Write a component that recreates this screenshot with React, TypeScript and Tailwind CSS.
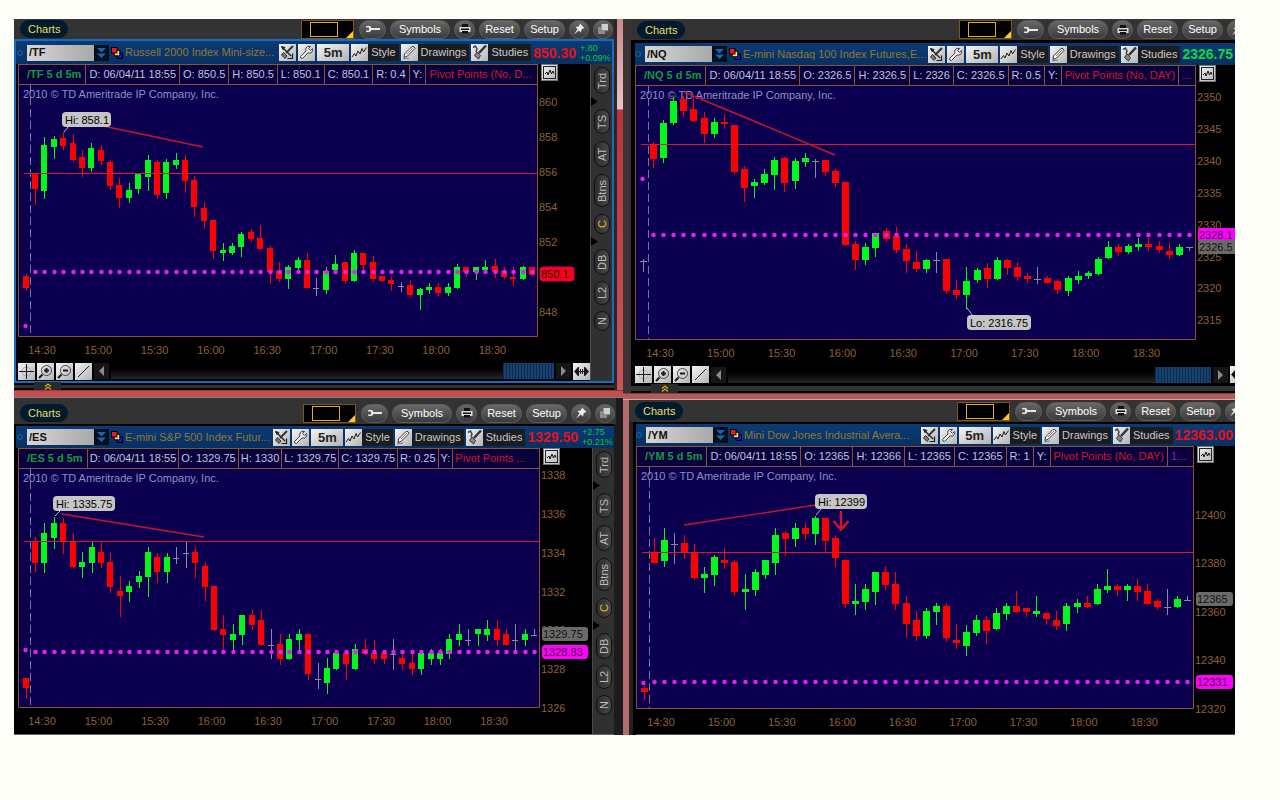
import type { ReactNode } from "react";
import clsx from "clsx";

// colour, wick top, body top, body bottom, wick bottom
type Candle = ["r" | "g" | "x", number, number, number, number];

type Badge = { y: number; text: string; className: string; width: number };

type ChartProps = {
  title: string;
  left: number;
  top: number;
  width: number;
  height: number;
  plotRight: number;
  plotBottom: number;
  firstX: number;
  step: number;
  bodyWidth: number;
  candles: Candle[];
  previous: { x: number; candle: Candle };
  sessionX: number;
  lineY: number;
  trend: [number, number, number, number];
  dotY: number;
  previousDotY: number;
  prices: [string, number][];
  firstTimeX: number;
  timeStep: number;
  timeY: number;
  badges: Badge[];
  callout: { x: number; y: number; width: number; text: string; tip: string };
  children?: ReactNode;
};

const FILLS = { r: "#ff0000", g: "#00f91a", x: "#8b87a0" };
const TIMES = ["14:30", "15:00", "15:30", "16:00", "16:30", "17:00", "17:30", "18:00", "18:30"];

const tfCandles: Candle[] = [
  ["r", 173, 173, 189, 204], ["g", 137, 145, 191, 198], ["g", 136, 139, 147, 158], ["r", 132, 138, 146, 149],
  ["r", 134, 143, 160, 161], ["r", 150, 157, 168, 176], ["g", 143, 148, 168, 171], ["r", 145, 150, 161, 164],
  ["r", 160, 162, 186, 189], ["r", 178, 185, 198, 207], ["g", 183, 190, 198, 202], ["g", 173, 174, 189, 193],
  ["g", 155, 160, 177, 190], ["r", 160, 162, 195, 198], ["g", 159, 162, 193, 198], ["g", 153, 160, 165, 168],
  ["r", 155, 160, 181, 192], ["r", 176, 180, 207, 216], ["r", 202, 208, 221, 228], ["r", 220, 220, 251, 258],
  ["g", 243, 250, 253, 260], ["g", 243, 246, 253, 254], ["g", 232, 234, 247, 256], ["r", 229, 232, 239, 241],
  ["r", 225, 238, 249, 249], ["r", 246, 248, 272, 283], ["r", 262, 271, 279, 281], ["g", 265, 267, 279, 288],
  ["g", 257, 260, 268, 270], ["r", 253, 260, 288, 288], ["x", 278, 288, 288, 295], ["g", 267, 271, 290, 293],
  ["g", 255, 264, 270, 272], ["r", 262, 262, 281, 283], ["g", 250, 253, 281, 281], ["r", 253, 253, 265, 270],
  ["r", 256, 262, 279, 281], ["r", 276, 276, 281, 281], ["r", 277, 280, 284, 290], ["x", 282, 286, 286, 291],
  ["r", 280, 285, 295, 296], ["g", 288, 289, 295, 309], ["g", 283, 287, 290, 293], ["r", 283, 287, 293, 295],
  ["g", 283, 287, 293, 295], ["g", 264, 267, 288, 288], ["r", 267, 267, 272, 276], ["g", 267, 267, 272, 279],
  ["g", 260, 267, 270, 270], ["r", 259, 266, 272, 277], ["r", 267, 271, 277, 278], ["r", 267, 277, 279, 285],
  ["g", 266, 267, 279, 279], ["r", 267, 267, 275, 275],
];

const nqCandles: Candle[] = [
  ["r", 142, 144, 159, 167], ["g", 120, 123, 158, 162], ["g", 97, 101, 123, 124], ["r", 96, 99, 111, 116],
  ["r", 97, 109, 121, 121], ["r", 112, 118, 134, 142], ["g", 118, 122, 134, 137], ["r", 114, 122, 124, 128],
  ["r", 125, 125, 172, 173], ["r", 166, 169, 188, 201], ["g", 179, 182, 186, 197], ["g", 169, 174, 183, 184],
  ["g", 157, 160, 175, 189], ["r", 157, 158, 183, 191], ["g", 158, 161, 181, 188], ["g", 153, 158, 162, 166],
  ["x", 159, 161, 161, 177], ["r", 160, 160, 172, 175], ["r", 169, 171, 183, 186], ["r", 182, 182, 245, 245],
  ["r", 241, 244, 260, 269], ["g", 243, 247, 260, 264], ["g", 233, 233, 248, 256], ["r", 228, 231, 239, 241],
  ["r", 227, 236, 250, 252], ["r", 244, 249, 261, 272], ["r", 251, 262, 269, 271], ["g", 259, 260, 269, 272],
  ["x", 252, 260, 260, 272], ["r", 259, 259, 291, 293], ["r", 280, 290, 295, 298], ["g", 267, 281, 295, 308],
  ["g", 268, 270, 280, 282], ["r", 263, 268, 279, 287], ["g", 257, 260, 279, 279], ["r", 259, 260, 268, 274],
  ["r", 262, 267, 277, 280], ["r", 273, 276, 279, 282], ["x", 267, 279, 279, 283], ["r", 276, 278, 283, 283],
  ["r", 279, 281, 290, 293], ["g", 276, 278, 291, 295], ["g", 271, 276, 280, 283], ["g", 271, 273, 276, 278],
  ["g", 257, 259, 274, 274], ["g", 241, 247, 258, 258], ["r", 244, 247, 252, 255], ["g", 244, 246, 252, 253],
  ["g", 238, 244, 247, 250], ["r", 238, 244, 247, 250], ["r", 241, 246, 250, 252], ["r", 243, 251, 255, 258],
  ["g", 244, 247, 255, 255], ["x", 247, 247, 247, 250],
];

const esCandles: Candle[] = [
  ["r", 537, 541, 563, 571], ["g", 523, 533, 563, 572], ["g", 517, 523, 538, 548], ["r", 518, 523, 542, 553],
  ["r", 533, 541, 567, 567], ["g", 552, 562, 567, 577], ["g", 542, 547, 563, 572], ["r", 542, 552, 563, 567],
  ["r", 553, 562, 587, 592], ["r", 576, 591, 596, 616], ["g", 581, 586, 592, 601], ["g", 571, 576, 582, 587],
  ["g", 547, 552, 577, 596], ["r", 553, 557, 572, 582], ["g", 553, 557, 572, 582], ["x", 547, 558, 558, 563],
  ["x", 542, 553, 553, 567], ["r", 547, 552, 563, 577], ["r", 562, 566, 587, 600], ["r", 586, 586, 630, 630],
  ["r", 615, 629, 635, 651], ["g", 624, 634, 640, 650], ["g", 615, 615, 635, 644], ["r", 610, 615, 625, 629],
  ["r", 610, 620, 645, 645], ["x", 629, 645, 645, 658], ["r", 634, 644, 659, 664], ["g", 634, 639, 659, 659],
  ["g", 629, 634, 640, 651], ["r", 634, 634, 674, 679], ["x", 663, 679, 679, 688], ["g", 658, 668, 683, 693],
  ["g", 650, 653, 669, 669], ["r", 650, 653, 664, 679], ["g", 644, 649, 669, 669], ["r", 639, 649, 654, 654],
  ["r", 640, 653, 659, 663], ["r", 650, 653, 659, 663], ["x", 639, 654, 654, 669], ["r", 654, 658, 664, 669],
  ["r", 654, 663, 669, 674], ["g", 652, 653, 669, 674], ["g", 649, 653, 659, 664], ["g", 649, 653, 659, 664],
  ["g", 634, 639, 654, 658], ["g", 624, 634, 640, 645], ["x", 629, 640, 640, 645], ["g", 629, 629, 634, 645],
  ["g", 620, 629, 635, 640], ["r", 620, 629, 640, 645], ["r", 629, 634, 645, 645], ["x", 624, 640, 640, 651],
  ["g", 629, 634, 640, 645], ["x", 629, 635, 635, 635],
];

const ymCandles: Candle[] = [
  ["r", 538, 552, 563, 563], ["g", 528, 540, 561, 566], ["x", 533, 544, 544, 563], ["r", 535, 543, 553, 558],
  ["r", 544, 552, 578, 579], ["g", 567, 574, 578, 592], ["g", 555, 557, 575, 585], ["r", 548, 560, 563, 568],
  ["r", 560, 562, 592, 595], ["g", 574, 589, 592, 609], ["g", 569, 572, 590, 595], ["g", 560, 560, 575, 578],
  ["g", 528, 535, 563, 574], ["r", 531, 533, 539, 555], ["g", 523, 528, 539, 546], ["r", 523, 528, 534, 539],
  ["g", 516, 518, 534, 544], ["r", 518, 518, 541, 550], ["r", 535, 538, 558, 566], ["r", 560, 560, 604, 607],
  ["g", 584, 601, 604, 614], ["g", 584, 589, 602, 609], ["g", 572, 572, 592, 604], ["r", 566, 572, 585, 589],
  ["r", 572, 584, 604, 609], ["r", 596, 603, 624, 636], ["r", 611, 620, 636, 640], ["g", 608, 611, 636, 638],
  ["g", 603, 606, 612, 624], ["r", 603, 606, 638, 641], ["r", 624, 640, 643, 648], ["g", 625, 632, 646, 655],
  ["g", 615, 620, 633, 635], ["r", 616, 620, 631, 643], ["g", 608, 613, 629, 629], ["g", 603, 606, 614, 619],
  ["r", 591, 606, 612, 612], ["r", 608, 608, 612, 616], ["g", 596, 611, 614, 616], ["r", 613, 613, 619, 624],
  ["r", 611, 620, 626, 629], ["g", 603, 606, 624, 630], ["g", 599, 603, 607, 612], ["r", 596, 603, 607, 607],
  ["g", 584, 589, 604, 604], ["g", 569, 586, 590, 592], ["r", 584, 586, 590, 595], ["g", 584, 586, 590, 600],
  ["r", 579, 586, 592, 600], ["r", 584, 591, 604, 604], ["r", 599, 601, 607, 609], ["x", 589, 607, 607, 614],
  ["g", 596, 599, 607, 607], ["x", 596, 600, 600, 600],
];

function CandleShape({ x, candle, width }: { x: number; candle: Candle; width: number }) {
  const [kind, high, open, close, low] = candle;
  const half = Math.floor(width / 2);
  return (
    <g fill={FILLS[kind]} shapeRendering="crispEdges">
      <rect x={x} y={high} width="1" height={low - high + 1} />
      <rect x={x - half} y={open} width={width} height={Math.max(close - open, 1)} />
    </g>
  );
}

function Chart(p: ChartProps) {
  return (
    <svg
      viewBox={`${p.left} ${p.top} ${p.width} ${p.height}`}
      className="block w-full h-auto text-[11px]"
      role="img"
      aria-label={p.title}
    >
      <rect x={p.left} y={p.top} width={p.plotRight - p.left} height={p.plotBottom - p.top} fill="#0a004f" />
      <path
        d={`M${p.left + 0.5} ${p.top}V${p.plotBottom + 0.5}H${p.plotRight + 0.5}V${p.top}`}
        fill="none"
        stroke="#8a5236"
      />
      <path d={`M${p.sessionX + 0.5} ${p.top}V${p.plotBottom}`} stroke="#77739a" strokeDasharray="8 4" />
      <text x={p.left + 5} y={p.top + 13} fill="#938fbe">
        2010 © TD Ameritrade IP Company, Inc.
      </text>
      <CandleShape x={p.previous.x} candle={p.previous.candle} width={p.bodyWidth} />
      {p.candles.map((candle, i) => (
        <CandleShape key={i} x={Math.round(p.firstX + p.step * i)} candle={candle} width={p.bodyWidth} />
      ))}
      <rect
        x={p.left + 6}
        y={p.lineY}
        width={p.plotRight - p.left - 6}
        height="1"
        fill="#e0142a"
        shapeRendering="crispEdges"
      />
      <path d={`M${p.trend[0]} ${p.trend[1]}L${p.trend[2]} ${p.trend[3]}`} stroke="#c8142f" strokeWidth="1.4" />
      <g fill="#ea1df0">
        <circle cx={p.left + 7.5} cy={p.previousDotY} r="2.2" />
        {p.candles.map((_, i) => (
          <circle key={i} cx={Math.round(p.firstX + p.step * i) + 0.5} cy={p.dotY} r="2.3" />
        ))}
      </g>
      {p.children}
      <path d={p.callout.tip} stroke="#b9b5d2" fill="none" />
      <rect x={p.callout.x} y={p.callout.y} width={p.callout.width} height="15" rx="4" fill="#c6c6c6" />
      <text x={p.callout.x + 3} y={p.callout.y + 12} fill="#000">
        {p.callout.text}
      </text>
      <g fill="#8d6036">
        {p.prices.map(([label, y]) => (
          <text key={label} x={p.plotRight + 2} y={y + 4}>
            {label}
          </text>
        ))}
        {TIMES.map((time, i) => (
          <text key={time} x={p.firstTimeX + p.timeStep * i} y={p.timeY + 4} textAnchor="middle">
            {time}
          </text>
        ))}
      </g>
      {p.badges.map((badge) => (
        <g key={badge.text}>
          <rect
            x={p.plotRight + 3}
            y={badge.y - 7}
            width={badge.width}
            height="14"
            rx="3"
            className={badge.className}
          />
          <text x={p.plotRight + 4} y={badge.y + 4} fill="#000" fillOpacity="0.85">
            {badge.text}
          </text>
        </g>
      ))}
    </svg>
  );
}

function PillButton({ label, className, children }: { label: string; className?: string; children?: ReactNode }) {
  return (
    <button
      type="button"
      aria-label={label}
      className={clsx(
        "flex h-[19px] shrink-0 items-center justify-center rounded-full border border-[#5f5f5f] bg-linear-to-b from-[#686868] to-[#3b3b3b] text-[11px] text-white",
        className
      )}
    >
      {children ?? label}
    </button>
  );
}

function WindowHeader({ className }: { className: string }) {
  return (
    <header className={clsx("flex items-center gap-1 pl-1.5 pr-px", className)}>
      <h2 className="rounded-full bg-[#021a2e] px-2 text-[11px] leading-[18px] text-[#f0dc5a]">Charts</h2>
      <div className="flex-1" />
      <button
        type="button"
        aria-label="Layout"
        className="mr-px flex h-[19px] w-[53px] shrink-0 items-end justify-between border border-[#7a5a10] bg-black pl-2"
      >
        <span className="mb-px h-[15px] w-[28px] border border-[#e8b018]" />
        <svg viewBox="0 0 7 7" className="size-[7px]">
          <path d="M7 0V7H0Z" fill="#ffc81e" />
        </svg>
      </button>
      <PillButton label="Tools" className="w-[27px]">
        <svg viewBox="0 0 16 8" className="h-2 w-4">
          <path d="M1 1.2Q5.5 0 6.6 3H15V5H6.6Q5.500 8 1 6.800V5.400H4V2.600H1Z" fill="#e8e8e8" />
        </svg>
      </PillButton>
      <PillButton label="Symbols" className="w-[60px]" />
      <PillButton label="Print" className="w-[21px]">
        <svg viewBox="0 0 12 12" className="size-3">
          <path d="M3 1H9V4H3Z" fill="#111" />
          <path d="M0.500 4H11.500V9H0.500Z" fill="#d8d8d8" />
          <path d="M2 5.500H10V7H2ZM3 8H9V10.500H3Z" fill="#111" />
        </svg>
      </PillButton>
      <PillButton label="Reset" className="w-[41px]" />
      <PillButton label="Setup" className="w-[41px]" />
      <PillButton label="Pin" className="w-[20px]">
        <svg viewBox="0 0 12 12" className="size-3">
          <path d="M7 0.500L11.500 5L10 5.500L8.500 6.500L8 9.500L5.800 7.500L1 11.500L4.500 6.200L2.500 4L5.500 3.500L6.500 2Z" fill="#ededed" />
        </svg>
      </PillButton>
      <PillButton label="Detach" className="w-[20px]">
        <svg viewBox="0 0 12 12" className="size-3">
          <path d="M1 4H4V8H8V11H1Z" fill="#8c8c8c" />
          <path d="M4.500 1H11V7.500H4.500Z" fill="#cfcfcf" />
        </svg>
      </PillButton>
    </header>
  );
}

const lightFace = "bg-linear-to-br from-[#f4f4f4] to-[#b4b4b4]";

function SquareIcon({ children }: { children: ReactNode }) {
  return (
    <svg viewBox="0 0 17 17" fill="none" stroke="#1b1b1b" className={clsx("size-[17px] shrink-0", lightFace)}>
      {children}
    </svg>
  );
}

function ToolButton({ label, icon }: { label: string; icon: ReactNode }) {
  return (
    <button type="button" className="flex shrink-0 items-center bg-[#1a1c1f] pr-[3px] text-[11px] text-[#c9c9c9]">
      {icon}
      <span className="pl-[3px]">{label}</span>
    </button>
  );
}

type SymbolBarProps = {
  symbol: string;
  name: string;
  price: string;
  priceClass: string;
  change?: [string, string];
  className: string;
};

function SymbolBar({ symbol, name, price, priceClass, change, className }: SymbolBarProps) {
  return (
    <div
      className={clsx(
        "flex items-center gap-0.5 overflow-hidden whitespace-nowrap bg-linear-to-b from-[#0b3a74] to-[#08305f]",
        className
      )}
    >
      <span className="mr-0.5 size-[6px] shrink-0 rounded-full border border-[#1766b0]" />
      <div className="flex shrink-0">
        <input
          aria-label="Symbol"
          defaultValue={symbol}
          className="h-4 w-[67px] bg-linear-to-r from-[#d6d6d6] to-[#a9a9a9] pl-0.5 text-[11px] font-bold text-[#111]"
        />
        <button type="button" aria-label="Symbol list" className="h-4 w-[15px] bg-[#04101f]">
          <svg viewBox="0 0 15 16" className="h-4 w-[15px]">
            <path d="M3 3H12L7.500 7.500ZM3 8.500H12L7.500 13Z" fill="#1c63ad" />
          </svg>
        </button>
      </div>
      <svg viewBox="0.500 0.500 13 13" className="size-3 shrink-0">
        <rect x="7" y="7" width="6" height="6" fill="#1414e6" stroke="#000" />
        <rect x="4" y="4" width="6" height="6" fill="#ffe65a" stroke="#000" />
        <rect x="1" y="1" width="6" height="6" fill="#f21818" stroke="#000" />
      </svg>
      <span className="min-w-0 flex-1 overflow-hidden text-[11px] text-[#8f7838]">{name}</span>
      <button type="button" aria-label="Link" className="shrink-0">
        <SquareIcon>
          <path d="M3 3L12 12" strokeWidth="1.200" />
          <path d="M13.500 9.500V14.500H8.500" strokeWidth="1.200" />
          <path d="M14 2L7 9" stroke="#333" strokeWidth="2" />
          <path d="M4.500 8.500L8 12L6 14.500L2.500 11Z" fill="#777" stroke="#333" />
          <path d="M2.500 2.500L6 3.500L4 5.500Z" fill="#333" />
        </SquareIcon>
      </button>
      <button type="button" aria-label="Settings" className="shrink-0">
        <SquareIcon>
          <path
            d="M14.500 4.500L12.500 6.500L10.500 4.500L12.500 2.500Q9.500 1.500 8 4Q7.300 5.500 8 7L2.500 12.500Q2 14.500 4.500 14.500L10 9Q13.500 10 14.500 7Q15 5.500 14.500 4.500Z"
            stroke="#444"
            fill="#e9e9e9"
          />
        </SquareIcon>
      </button>
      <button
        type="button"
        className={clsx("h-[17px] w-8 shrink-0 text-[13px] leading-[17px] font-bold text-[#222]", lightFace)}
      >
        5m
      </button>
      <ToolButton
        label="Style"
        icon={
          <SquareIcon>
            <path d="M1 13L3.500 9.500L5 12L7 7L9 10L11 4.500L12.500 8L15.500 3.500" />
          </SquareIcon>
        }
      />
      <ToolButton
        label="Drawings"
        icon={
          <SquareIcon>
            <path d="M3.500 10L11 2.500Q13.500 2 14 4.500L6.500 12L3 13.500Z" fill="#fff" stroke="#333" />
            <path d="M6 10L12 4M2 15L8 14" stroke="#777" />
          </SquareIcon>
        }
      />
      <ToolButton
        label="Studies"
        icon={
          <SquareIcon>
            <path d="M15 1.500L8 9" stroke="#333" strokeWidth="2.500" />
            <path d="M6 8L9.500 11.500L7.500 15L3.500 11.500Z" fill="#888" stroke="#333" />
            <path d="M2 3.500L4.500 2L6 5L5 8" stroke="#444" strokeWidth="1.500" />
          </SquareIcon>
        }
      />
      <strong className={clsx("shrink-0 pr-0.5 text-sm leading-5", priceClass)}>{price}</strong>
      {change && (
        <span className="w-8 shrink-0 text-[9px] leading-[10px] text-[#0cc44a]">
          {change[0]}
          <br />
          {change[1]}
        </span>
      )}
    </div>
  );
}

type InfoRowProps = { cells: string[]; study: string; extra?: string; dense?: boolean; iconClass: string };

function InfoRow({ cells, study, extra, dense, iconClass }: InfoRowProps) {
  const pad = dense ? "px-0.5" : "px-[3px]";
  return (
    <div className="flex h-[21px] text-[11px] leading-[19px] whitespace-nowrap">
      <div className="flex min-w-0 flex-1 divide-x divide-[#8a5236] overflow-hidden border border-[#8a5236] bg-[#07003c] text-[#c3c1dc]">
        {cells.map((cell, i) => (
          <span key={cell} className={clsx("shrink-0", i === 0 ? "pl-2 pr-1 font-bold text-[#129a3c]" : pad)}>
            {cell}
          </span>
        ))}
        <span className={clsx("overflow-hidden text-[#d0142e]", pad, extra ? "shrink-0" : "min-w-0 flex-1")}>
          {study}
        </span>
        {extra && <span className="min-w-0 flex-1 overflow-hidden pl-[3px] text-[#8c22c8]">{extra}</span>}
      </div>
      <div className={clsx("shrink-0 pl-[3px]", iconClass)}>
        <button type="button" aria-label="Chart mode" className="block border border-[#777]">
          <svg viewBox="0 0 15 15" className={clsx("size-[15px]", lightFace)}>
            <rect x="1.500" y="1.500" width="12" height="12" fill="none" stroke="#222" />
            <path d="M3 9L5 7L6 10L8 5L9.500 9L11 6L12 8.500" fill="none" stroke="#111" />
          </svg>
        </button>
      </div>
    </div>
  );
}

function ScrollRow({ className, thumbClass }: { className: string; thumbClass: string }) {
  return (
    <div className={clsx("flex items-center gap-0.5", className)}>
      <button type="button" aria-label="Crosshair">
        <SquareIcon>
          <circle cx="8.500" cy="8.500" r="4.500" stroke="#aaa" />
          <path d="M8.500 1V16M1 8.500H16" />
        </SquareIcon>
      </button>
      <button type="button" aria-label="Zoom in">
        <SquareIcon>
          <circle cx="9.500" cy="7.500" r="5" stroke="#444" />
          <path d="M9.500 5V10M7 7.500H12M5.500 11.500L2 15" strokeWidth="2" />
        </SquareIcon>
      </button>
      <button type="button" aria-label="Zoom out">
        <SquareIcon>
          <circle cx="9.500" cy="7.500" r="5" stroke="#444" />
          <path d="M7 7.500H12M5.500 11.500L2 15" strokeWidth="2" />
        </SquareIcon>
      </button>
      <button type="button" aria-label="Draw line">
        <SquareIcon>
          <path d="M3 14L14 3" />
        </SquareIcon>
      </button>
      <button type="button" aria-label="Scroll left" className="flex h-4 w-[15px] items-center justify-center bg-[#161616]">
        <svg viewBox="0 0 5 10" className="h-2.5 w-[5px]">
          <path d="M5 0V10L0 5Z" fill="#8a8a8a" />
        </svg>
      </button>
      <div className="flex h-4 flex-1 justify-end bg-linear-to-b from-black to-[#262626]">
        <div
          className={clsx(
            "h-4 bg-[repeating-linear-gradient(90deg,#0e2c50_0px,#0e2c50_1px,#17426f_1px,#17426f_3px)]",
            thumbClass
          )}
        />
      </div>
      <button type="button" aria-label="Scroll right" className="flex h-4 w-[15px] items-center justify-center bg-[#161616]">
        <svg viewBox="0 0 5 10" className="h-2.5 w-[5px]">
          <path d="M0 0V10L5 5Z" fill="#8a8a8a" />
        </svg>
      </button>
      <button type="button" aria-label="Fit width">
        <SquareIcon>
          <path d="M5.500 4V13L1.500 8.500ZM11.500 4V13L15.500 8.500Z" fill="#111" />
          <path d="M5 8.500H12M7.500 6V11M9.500 6V11" />
        </SquareIcon>
      </button>
    </div>
  );
}

function Notch() {
  return (
    <svg viewBox="0 0 22 15" className="h-[15px] w-[22px]">
      <path d="M0 3L7 7.500L0 12Z" fill="#000" />
    </svg>
  );
}

function SideTab({ label, className }: { label: string; className: string }) {
  return (
    <button
      type="button"
      className={clsx(
        "flex w-4 rotate-180 items-center justify-center self-center rounded-full border border-[#111] bg-linear-to-r from-[#484848] to-[#2d2d2d] text-[11px] leading-[14px] [writing-mode:vertical-rl]",
        className
      )}
    >
      {label}
    </button>
  );
}

function SideTabs() {
  return (
    <nav className="flex w-[22px] shrink-0 flex-col border-l border-[#4a4a4a] bg-[#303030] pt-[3px] text-[#bdbdbd]">
      <SideTab label="Trd" className="h-[27px]" />
      <Notch />
      <SideTab label="TS" className="mb-[7px] h-[25px]" />
      <SideTab label="AT" className="mb-[7px] h-[26px]" />
      <SideTab label="Btns" className="mb-[7px] h-[33px]" />
      <SideTab label="C" className="h-[20px] text-[#e8c01c]" />
      <Notch />
      <SideTab label="DB" className="mb-[6px] h-[26px]" />
      <SideTab label="L2" className="mb-[6px] h-[24px]" />
      <SideTab label="N" className="h-[20px]" />
    </nav>
  );
}

function Drawer({ className }: { className: string }) {
  return (
    <div className={clsx("flex items-center border-y-2 border-black bg-[#333]", className)}>
      <button
        type="button"
        aria-label="Expand"
        className="-my-1 ml-5 flex h-[9px] w-[27px] items-center justify-center bg-[#2b2b2b]"
      >
        <svg viewBox="0 0 8 7" className="h-[7px] w-2" fill="none" stroke="#d8a818" strokeWidth="1.200">
          <path d="M1 3.500L4 1L7 3.500M1 6.500L4 4L7 6.500" />
        </svg>
      </button>
    </div>
  );
}

export default function App() {
  return (
    <div className="min-h-screen bg-[#fdfef8] pt-[19px] pr-[45px] pl-[14px] font-['Liberation_Sans',Arial,sans-serif]">
      <main className="grid grid-cols-[609fr_612fr] items-start overflow-hidden bg-[#1c1c1c]">
        <div className="flex min-w-0 flex-col">
          <div className="bg-[linear-gradient(180deg,#c98a8c_0px,#ecc4c4_90px,#b8343b_91px,#c8555a_100%)] pr-1.5">
            <div className="bg-[#2a2626] pr-[3px]">
              <WindowHeader className="h-5 bg-[#333]" />
              <section className="border-2 border-[#1a6ac4] bg-black">
                <SymbolBar
                  className="h-[23px] pl-px"
                  symbol="/TF"
                  name="Russell 2000 Index Mini-size..."
                  price="850.30"
                  priceClass="text-[#e80f1c]"
                  change={["+.80", "+0.09%"]}
                />
                <div className="flex">
                  <div className="min-w-0 flex-1 pl-0.5">
                    <InfoRow
                      cells={["/TF 5 d 5m", "D: 06/04/11 18:55", "O: 850.5", "H: 850.5", "L: 850.1", "C: 850.1", "R: 0.4", "Y: "]}
                      study="Pivot Points (No, D..."
                      iconClass="w-[52px]"
                    />
                    <Chart
                      title="/TF 5 day 5 minute chart"
                      left={18}
                      top={85}
                      width={572}
                      height={276}
                      plotRight={537}
                      plotBottom={336}
                      firstX={35}
                      step={9.38}
                      bodyWidth={6}
                      candles={tfCandles}
                      previous={{ x: 26, candle: ["r", 274, 276, 288, 290] }}
                      sessionX={30}
                      lineY={173}
                      trend={[103, 126, 203, 147]}
                      dotY={272}
                      previousDotY={326}
                      prices={[["860", 102], ["858", 137], ["856", 172], ["854", 207], ["852", 242], ["848", 312]]}
                      firstTimeX={42}
                      timeStep={56.3}
                      timeY={350}
                      badges={[{ y: 274, text: "850.1", className: "fill-[#fb0015] stroke-[#d3007a]", width: 34 }]}
                      callout={{ x: 62, y: 112, width: 49, text: "Hi: 858.1", tip: "M69 126L64 132" }}
                    />
                    <ScrollRow className="h-5" thumbClass="w-[51px]" />
                  </div>
                  <SideTabs />
                </div>
              </section>
              <Drawer className="h-[7px]" />
            </div>
          </div>
          <div className="h-2 border-y border-t-[#8c3a3a] border-b-[#5d8a9c] bg-[#c84b4e]" />
          <div className="pr-[7px]">
            <WindowHeader className="h-[26px] bg-[#333] pt-1" />
            <section className="mr-0.5 border-t-2 border-black bg-black">
              <SymbolBar
                className="ml-0.5 h-[22px] pl-px"
                symbol="/ES"
                name="E-mini S&P 500 Index Futur..."
                price="1329.50"
                priceClass="text-[#e80f1c]"
                change={["+2.75", "+0.21%"]}
              />
              <div className="flex">
                <div className="min-w-0 flex-1 pl-1">
                  <InfoRow
                    cells={["/ES 5 d 5m", "D: 06/04/11 18:55", "O: 1329.75", "H: 1330", "L: 1329.75", "C: 1329.75", "R: 0.25", "Y: "]}
                    study="Pivot Points ..."
                    dense
                    iconClass="w-[52px]"
                  />
                  <Chart
                    title="/ES 5 day 5 minute chart"
                    left={18}
                    top={469}
                    width={574}
                    height={265}
                    plotRight={539}
                    plotBottom={707}
                    firstX={35}
                    step={9.42}
                    bodyWidth={6}
                    candles={esCandles}
                    previous={{ x: 26, candle: ["r", 678, 678, 688, 698] }}
                    sessionX={30}
                    lineY={541}
                    trend={[62, 514, 204, 537]}
                    dotY={652}
                    previousDotY={650}
                    prices={[["1338", 475], ["1336", 514], ["1334", 553], ["1332", 592], ["1330", 630], ["1328", 669], ["1326", 708]]}
                    firstTimeX={42}
                    timeStep={56.5}
                    timeY={721}
                    badges={[
                      { y: 634, text: "1329.75", className: "fill-[#6a6a6a]", width: 46 },
                      { y: 652, text: "1328.83", className: "fill-[#ff00ff]", width: 46 },
                    ]}
                    callout={{ x: 53, y: 496, width: 62, text: "Hi: 1335.75", tip: "M60 511L55 516" }}
                  />
                </div>
                <SideTabs />
              </div>
              <div className="h-px bg-[#666]" />
            </section>
          </div>
        </div>

        <div className="flex min-w-0 flex-col overflow-hidden">
          <div className="border-l-8 border-[#3a3434] bg-black">
            <WindowHeader className="-mr-[37px] h-[21px] bg-[#333]" />
            <section className="border-t-[3px] border-black pl-1">
              <SymbolBar
                className="h-[22px]"
                symbol="/NQ"
                name="E-mini Nasdaq 100 Index Futures,E..."
                price="2326.75"
                priceClass="text-[#10d83c]"
              />
              <InfoRow
                cells={["/NQ 5 d 5m", "D: 06/04/11 18:55", "O: 2326.5", "H: 2326.5", "L: 2326", "C: 2326.5", "R: 0.5", "Y: "]}
                study="Pivot Points (No, DAY)"
                extra="..."
                iconClass="w-[39px]"
              />
              <Chart
                title="/NQ 5 day 5 minute chart"
                left={635}
                top={86}
                width={600}
                height={279}
                plotRight={1195}
                plotBottom={339}
                firstX={653}
                step={10.11}
                bodyWidth={7}
                candles={nqCandles}
                previous={{ x: 643, candle: ["x", 259, 261, 261, 271] }}
                sessionX={648}
                lineY={144}
                trend={[684, 92, 835, 155]}
                dotY={235}
                previousDotY={179}
                prices={[["2350", 97], ["2345", 129], ["2340", 161], ["2335", 193], ["2330", 225], ["2325", 257], ["2320", 288], ["2315", 320]]}
                firstTimeX={660}
                timeStep={60.8}
                timeY={353}
                badges={[
                  { y: 235, text: "2328.1", className: "fill-[#ff00ff]", width: 46 },
                  { y: 247, text: "2326.5", className: "fill-[#6a6a6a]", width: 46 },
                ]}
                callout={{ x: 967, y: 315, width: 64, text: "Lo: 2316.75", tip: "M967 308L973 316" }}
              />
              <ScrollRow className="-mr-3 h-[19px]" thumbClass="w-[56px]" />
            </section>
            <Drawer className="h-[9px]" />
          </div>
          <div className="h-[7px] border-y border-t-[#7a4644] border-b-[#d7a3a0] bg-[#b05c5c]" />
          <div className="border-l-[6px] border-[#b56a6c] bg-[#222]">
            <WindowHeader className="-mr-[35px] h-[22px] bg-[#333]" />
            <section className="ml-1 border-t-2 border-black bg-black pl-[3px]">
              <SymbolBar
                className="h-[22px]"
                symbol="/YM"
                name="Mini Dow Jones Industrial Avera..."
                price="12363.00"
                priceClass="text-[#e80f1c]"
              />
              <InfoRow
                cells={["/YM 5 d 5m", "D: 06/04/11 18:55", "O: 12365", "H: 12366", "L: 12365", "C: 12365", "R: 1", "Y: "]}
                study="Pivot Points (No, DAY)"
                extra="1..."
                iconClass="w-[41px]"
              />
              <Chart
                title="/YM 5 day 5 minute chart"
                left={636}
                top={467}
                width={599}
                height={267}
                plotRight={1193}
                plotBottom={708}
                firstX={654}
                step={10.06}
                bodyWidth={7}
                candles={ymCandles}
                previous={{ x: 644, candle: ["r", 686, 688, 692, 699] }}
                sessionX={649}
                lineY={552}
                trend={[684, 525, 816, 505]}
                dotY={682}
                previousDotY={683}
                prices={[["12400", 515], ["12380", 563], ["12360", 612], ["12340", 660], ["12320", 709]]}
                firstTimeX={661}
                timeStep={60.4}
                timeY={722}
                badges={[
                  { y: 599, text: "12365", className: "fill-[#6a6a6a]", width: 37 },
                  { y: 682, text: "12331", className: "fill-[#ff00ff]", width: 37 },
                ]}
                callout={{ x: 815, y: 494, width: 52, text: "Hi: 12399", tip: "M821 509L816 515" }}
              >
                <path d="M841 511V529M833.500 521L841 529.500L848.500 521" fill="none" stroke="#d3122c" strokeWidth="2.500" />
              </Chart>
              <div className="h-px bg-[#555]" />
            </section>
          </div>
        </div>
      </main>
    </div>
  );
}
